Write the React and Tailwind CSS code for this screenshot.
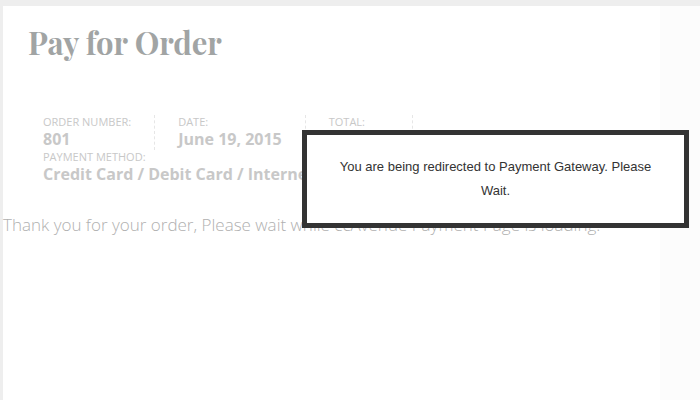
const details = [
  { label: 'Order Number:', value: '801', width: '' },
  { label: 'Date:', value: 'June 19, 2015', width: '' },
  { label: 'Total:', value: '', width: 'min-w-[84px]' },
];

function Detail({ label, value, className }) {
  return (
    <div className={`h-[35px] ${className}`}>
      <dt className="text-[11px] leading-[14px] font-normal uppercase">{label}</dt>
      <dd className="text-[16px] leading-[21px] font-bold">{value}</dd>
    </div>
  );
}

export default function App() {
  return (
    <div className="relative min-h-screen overflow-hidden bg-[#eeeeee] pt-1.5 pl-[3px] font-['Open_Sans',sans-serif] text-[#c8c8c8]">
      <div className="flex min-h-screen bg-white">
        <main className="min-w-0 flex-1">
          <h1 className="px-[25px] pt-4 font-['Playfair_Display','Liberation_Serif',serif] text-[31px] leading-[41px] font-bold text-[#a1a4a4]">
            Pay for Order
          </h1>
          <dl className="mt-[52px] flex flex-wrap px-10">
            {details.map((d) => (
              <Detail
                key={d.label}
                label={d.label}
                value={d.value}
                className={`mr-[23px] border-r border-dashed border-[#e6e6e6] pr-[23px] ${d.width}`}
              />
            ))}
            <Detail
              label="Payment Method:"
              value="Credit Card / Debit Card / Internet Banking"
              className="w-full"
            />
          </dl>
          <p className="mt-6 text-[17px] leading-8 font-light whitespace-nowrap text-[#b0b0b0]">
            Thank you for your order, Please wait while ccAvenue Payment Page is loading.
          </p>
        </main>
        <aside className="w-10 shrink-0 bg-[#fcfcfc]" />
      </div>
      <div
        role="dialog"
        aria-label="Payment redirect"
        className="absolute top-[130px] right-[11px] w-[387px] border-5 border-[#333333] bg-white p-5 text-center font-['Liberation_Sans',Arial,sans-serif] text-[13px] leading-6 text-[#333333]"
      >
        You are being redirected to Payment Gateway. Please Wait.
      </div>
    </div>
  );
}
